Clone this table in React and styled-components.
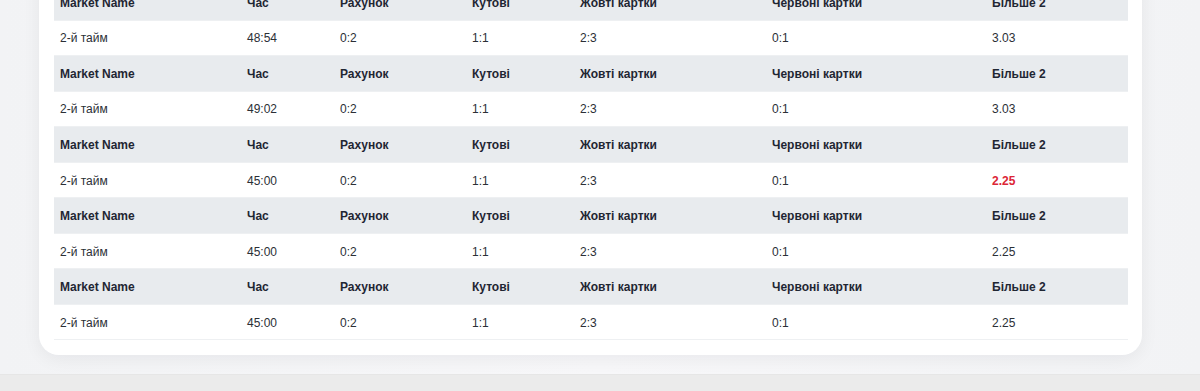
import React from 'react';
import styled, { createGlobalStyle } from 'styled-components';

const GlobalStyle = createGlobalStyle`
  html, body {
    margin: 0;
    padding: 0;
    height: 100%;
    overflow: hidden;
  }
  body {
    background: #f3f4f6;
    font-family: "Liberation Sans", Arial, sans-serif;
  }
`;

const Page = styled.div`
  min-height: 391px;
  display: flex;
  flex-direction: column;
  background: linear-gradient(90deg, #f2f3f5 0%, #f7f7f9 50%, #f2f3f5 100%);
`;

const Content = styled.main`
  flex: 1;
  padding: 0 58px 19px 39px;
`;

const Card = styled.section`
  margin-top: -40px;
  background: #ffffff;
  border-radius: 20px;
  padding: 25px 14px 15px 15px;
  box-shadow: 0 4px 18px rgba(15, 23, 42, 0.06);
`;

const Row = styled.div`
  display: grid;
  grid-template-columns: 187px 93px 132px 108px 192px 220px 142px;
  align-items: center;
  height: 35.56px;
  box-sizing: border-box;
  padding-top: 1px;
  border-bottom: 1px solid #eef0f2;
  background: ${(p) => (p.$head ? '#e8ebee' : '#ffffff')};
`;

const Cell = styled.div`
  padding: 0 6px;
  font-size: 12px;
  font-weight: ${(p) => (p.$head || p.$alert ? 700 : 400)};
  color: ${(p) => (p.$alert ? '#dc2636' : p.$head ? '#1f2633' : '#2b2f36')};
  white-space: nowrap;
`;

const Footer = styled.footer`
  height: 16px;
  background: #ebebeb;
  border-top: 1px solid #e6e6e6;
`;

const headers = ['Market Name', 'Час', 'Рахунок', 'Кутові', 'Жовті картки', 'Червоні картки', 'Більше 2'];

const rows = [
  { time: '48:54', odds: '3.03' },
  { time: '49:02', odds: '3.03' },
  { time: '45:00', odds: '2.25', alert: true },
  { time: '45:00', odds: '2.25' },
  { time: '45:00', odds: '2.25' }
];

export default function App() {
  return (
    <>
      <GlobalStyle />
      <Page>
        <Content>
          <Card>
            {rows.map((r, i) => (
              <React.Fragment key={i}>
                <Row $head>
                  {headers.map((h) => (
                    <Cell $head key={h}>{h}</Cell>
                  ))}
                </Row>
                <Row>
                  <Cell>2-й тайм</Cell>
                  <Cell>{r.time}</Cell>
                  <Cell>0:2</Cell>
                  <Cell>1:1</Cell>
                  <Cell>2:3</Cell>
                  <Cell>0:1</Cell>
                  <Cell $alert={r.alert}>{r.odds}</Cell>
                </Row>
              </React.Fragment>
            ))}
          </Card>
        </Content>
        <Footer />
      </Page>
    </>
  );
}
